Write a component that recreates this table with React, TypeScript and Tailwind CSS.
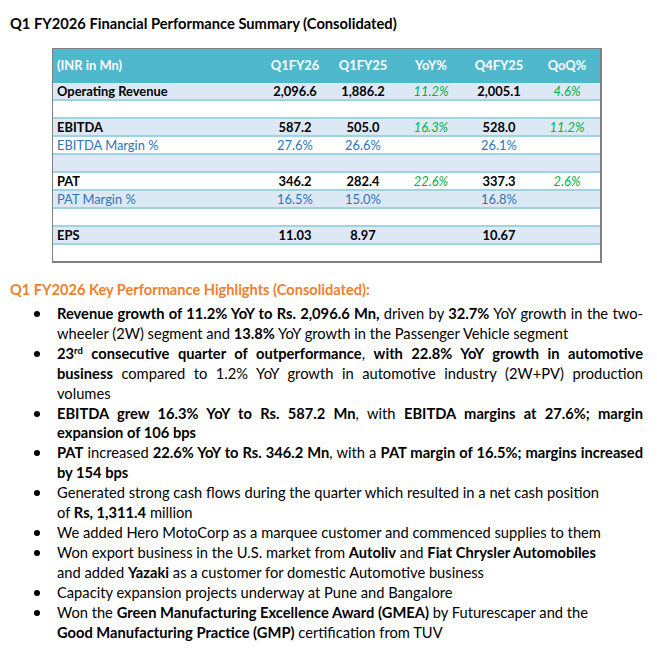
import React from 'react'

type Cell = { text: string; tone?: 'bold' | 'blue' | 'green' }
type Row = { label: string; labelTone?: 'bold' | 'blue'; cells: Cell[]; shade: boolean }

const rows: Row[] = [
  { label: 'Operating Revenue', labelTone: 'bold', shade: true, cells: [{ text: '2,096.6', tone: 'bold' }, { text: '1,886.2', tone: 'bold' }, { text: '11.2%', tone: 'green' }, { text: '2,005.1', tone: 'bold' }, { text: '4.6%', tone: 'green' }] },
  { label: '', shade: false, cells: [] },
  { label: 'EBITDA', labelTone: 'bold', shade: true, cells: [{ text: '587.2', tone: 'bold' }, { text: '505.0', tone: 'bold' }, { text: '16.3%', tone: 'green' }, { text: '528.0', tone: 'bold' }, { text: '11.2%', tone: 'green' }] },
  { label: 'EBITDA Margin %', labelTone: 'blue', shade: false, cells: [{ text: '27.6%', tone: 'blue' }, { text: '26.6%', tone: 'blue' }, { text: '' }, { text: '26.1%', tone: 'blue' }, { text: '' }] },
  { label: '', shade: true, cells: [] },
  { label: 'PAT', labelTone: 'bold', shade: false, cells: [{ text: '346.2', tone: 'bold' }, { text: '282.4', tone: 'bold' }, { text: '22.6%', tone: 'green' }, { text: '337.3', tone: 'bold' }, { text: '2.6%', tone: 'green' }] },
  { label: 'PAT Margin %', labelTone: 'blue', shade: true, cells: [{ text: '16.5%', tone: 'blue' }, { text: '15.0%', tone: 'blue' }, { text: '' }, { text: '16.8%', tone: 'blue' }, { text: '' }] },
  { label: '', shade: false, cells: [] },
  { label: 'EPS', labelTone: 'bold', shade: true, cells: [{ text: '11.03', tone: 'bold' }, { text: '8.97', tone: 'bold' }, { text: '' }, { text: '10.67', tone: 'bold' }, { text: '' }] },
]

const toneClass = (tone?: string) =>
  tone === 'bold' ? 'font-bold text-black' : tone === 'blue' ? 'text-[#2e75b6]' : tone === 'green' ? 'italic text-[#00b050]' : 'text-black'

const Bullet = ({ children }: { children: React.ReactNode }) => (
  <li className="flex">
    <span className="flex w-[57px] shrink-0 pl-[34px]">
      <span className="mt-[7px] h-[6px] w-[6px] rounded-full bg-black" />
    </span>
    <div className="w-[586px]">{children}</div>
  </li>
)

// one visual line of the source document; justified lines stretch to the right edge
const Line = ({ children, justify }: { children: React.ReactNode; justify?: boolean }) => (
  <div className={justify ? 'text-justify [text-align-last:justify]' : 'whitespace-nowrap'}>{children}</div>
)

export default function App() {
  return (
    <div className="h-[672px] w-[657px] overflow-hidden bg-white font-['Lato',sans-serif] text-black">
      <h1 className="pl-[10px] pt-[13px] text-[14.7px] font-bold leading-[20px]">
        Q1 FY2026 Financial Performance Summary (Consolidated)
      </h1>

      <div className="ml-[52px] mt-[15px] w-[550px] border-b-2 border-l border-r-2 border-t border-[#808080] text-[12.9px]">
        <div className="grid h-[34px] grid-cols-[208px_repeat(5,68px)] items-center bg-[#4fb8cd] font-bold text-white">
          <span className="pl-1">(INR in Mn)</span>
          <span className="text-center">Q1FY26</span>
          <span className="text-center">Q1FY25</span>
          <span className="text-center">YoY%</span>
          <span className="text-center">Q4FY25</span>
          <span className="text-center">QoQ%</span>
        </div>
        {rows.map((r, i) => (
          <div
            key={i}
            className={`grid h-[18px] grid-cols-[208px_repeat(5,68px)] items-center border-b-2 border-[#9fd3e0] leading-[16px] ${r.shade ? 'bg-[#dce9f5]' : 'bg-white'}`}
          >
            <span className={`pl-1 ${toneClass(r.labelTone)}`}>{r.label}</span>
            {r.cells.map((c, j) => (
              <span key={j} className={`text-center ${toneClass(c.tone)}`}>
                {c.text}
              </span>
            ))}
          </div>
        ))}
        <div className="h-[16px] bg-white" />
      </div>

      <h2 className="mt-[17px] pl-[10px] text-[14.6px] font-bold leading-[20px] text-[#f07f2d]">
        Q1 FY2026 Key Performance Highlights (Consolidated):
      </h2>

      <ul className="mt-[4px] text-[14.7px] leading-[19.9px]">
        <Bullet>
          <Line justify>
            <b>Revenue growth of 11.2% YoY to Rs. 2,096.6 Mn,</b> driven by <b>32.7%</b> YoY growth in the two-
          </Line>
          <Line>
            wheeler (2W) segment and <b>13.8%</b> YoY growth in the Passenger Vehicle segment
          </Line>
        </Bullet>
        <Bullet>
          <Line justify>
            <b>
              23<sup className="text-[9.5px]">rd</sup> consecutive quarter of outperformance
            </b>
            , <b>with 22.8% YoY growth in automotive</b>
          </Line>
          <Line justify>
            <b>business</b> compared to 1.2% YoY growth in automotive industry (2W+PV) production
          </Line>
          <Line>volumes</Line>
        </Bullet>
        <Bullet>
          <Line justify>
            <b>EBITDA grew 16.3% YoY to Rs. 587.2 Mn</b>, with <b>EBITDA margins at 27.6%; margin</b>
          </Line>
          <Line>
            <b>expansion of 106 bps</b>
          </Line>
        </Bullet>
        <Bullet>
          <Line justify>
            <b>PAT</b> increased <b>22.6% YoY to Rs. 346.2 Mn</b>, with a <b>PAT margin of 16.5%; margins increased</b>
          </Line>
          <Line>
            <b>by 154 bps</b>
          </Line>
        </Bullet>
        <Bullet>
          <Line>Generated strong cash flows during the quarter which resulted in a net cash position</Line>
          <Line>
            of <b>Rs, 1,311.4</b> million
          </Line>
        </Bullet>
        <Bullet>
          <Line>We added Hero MotoCorp as a marquee customer and commenced supplies to them</Line>
        </Bullet>
        <Bullet>
          <Line>
            Won export business in the U.S. market from <b>Autoliv</b> and <b>Fiat Chrysler Automobiles</b>
          </Line>
          <Line>
            and added <b>Yazaki</b> as a customer for domestic Automotive business
          </Line>
        </Bullet>
        <Bullet>
          <Line>Capacity expansion projects underway at Pune and Bangalore</Line>
        </Bullet>
        <Bullet>
          <Line>
            Won the <b>Green Manufacturing Excellence Award (GMEA)</b> by Futurescaper and the
          </Line>
          <Line>
            <b>Good Manufacturing Practice (GMP)</b> certification from TUV
          </Line>
        </Bullet>
      </ul>
    </div>
  )
}
